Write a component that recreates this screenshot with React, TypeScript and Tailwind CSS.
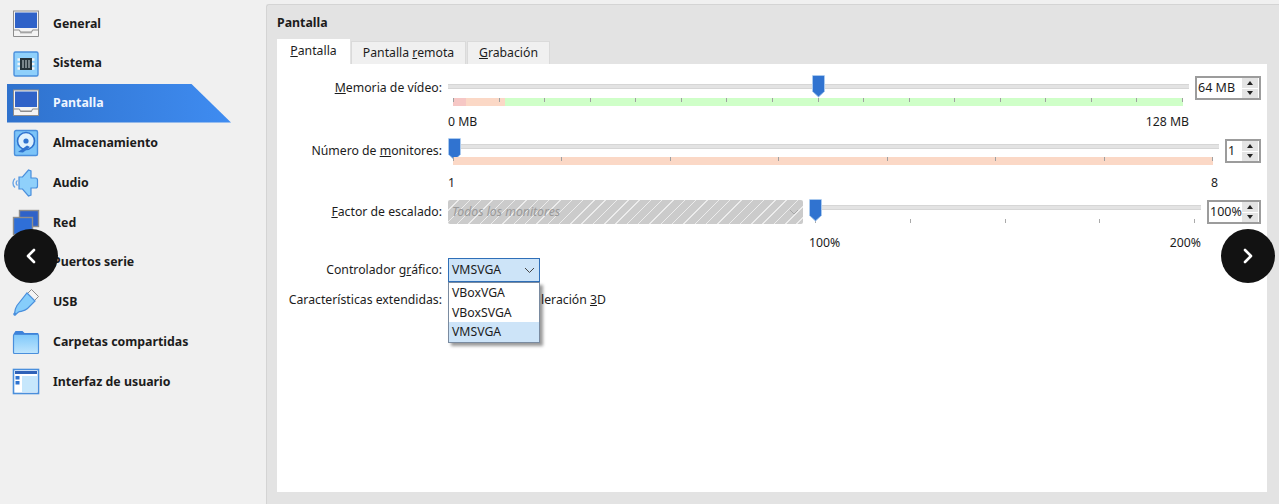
import React from 'react';

const Monitor = ({ tray }: { tray?: boolean }) => (
  <svg width="28" height="28" viewBox="0 0 28 28">
    <rect x="1.5" y="1" width="25" height="21" fill="#f4f4f4" stroke="#8d8d8d" />
    <rect x="3" y="2.5" width="22" height="15.5" fill="#2f62c8" />
    <path d="M1.5 20h6l1 2.5h11l1-2.5h6v6.5h-25z" fill="#f4f4f4" stroke="#8d8d8d" />
    {tray && <path d="M8 23h12" stroke="#bbb" />}
  </svg>
);

const SystemIcon = () => (
  <svg width="28" height="28" viewBox="0 0 28 28">
    <rect x="2" y="2" width="24" height="24" rx="1.5" fill="#8fd0fb" stroke="#4a8fdc" strokeWidth="1.4" />
    <rect x="8" y="8" width="12" height="12" fill="#263238" />
    <path d="M5.5 9.5H8M5.5 14H8M5.5 18.5H8M20 9.5h2.5M20 14h2.5M20 18.5h2.5" stroke="#f4f4f4" strokeWidth="2.4" />
    <path d="M11 10v8M14 10v8M17 10v8" stroke="#cfd8dc" strokeWidth="1" />
  </svg>
);

const DiskIcon = () => (
  <svg width="28" height="28" viewBox="0 0 28 28">
    <rect x="2.5" y="1.5" width="23" height="25" rx="1.5" fill="#7cc4f8" stroke="#4a8fdc" strokeWidth="1.4" />
    <circle cx="14" cy="12" r="8.5" fill="#dff1fd" stroke="#2f73cf" strokeWidth="1.6" />
    <circle cx="14" cy="12" r="2.6" fill="#2f73cf" />
    <path d="M6 23l9-6.5 3 1.5-7 5.5z" fill="#2f73cf" />
  </svg>
);

const AudioIcon = () => (
  <svg width="28" height="28" viewBox="0 0 28 28">
    <path d="M3 9.5a6 6 0 0 0 0 9" fill="none" stroke="#6aa5e6" strokeWidth="1.4" />
    <path d="M5.5 11.5a3 3 0 0 0 0 5" fill="none" stroke="#6aa5e6" strokeWidth="1.4" />
    <path d="M7 8l3.5 0 6-7 2.5 1v7h4.5a2 2 0 0 1 2 2v6a2 2 0 0 1-2 2H19v7l-2.5 1-6-7H7z" fill="#8fd0fb" stroke="#4a8fdc" strokeWidth="1.2" />
  </svg>
);

const NetIcon = () => (
  <svg width="28" height="28" viewBox="0 0 28 28">
    <rect x="7.5" y="1.5" width="19" height="16" fill="#2f62c8" stroke="#8d8d8d" strokeWidth="1.4" />
    <rect x="1.5" y="8.5" width="19" height="17" fill="#2f6fd8" stroke="#8d8d8d" strokeWidth="1.4" />
  </svg>
);

const UsbIcon = () => (
  <svg width="28" height="28" viewBox="0 0 28 28">
    <path d="M19.5 1.5l7 7-4 4-7-7z" fill="#f4f4f4" stroke="#8d8d8d" />
    <path d="M15 5l8 8-7.5 7.5c-3 3-6.5 2.5-9 3.5L3 27c-.8-3 .2-6.5 2-9.500z" fill="#86cdfb" stroke="#4a8fdc" strokeWidth="1.2" />
    <circle cx="2.800" cy="26" r="1.600" fill="#4a8fdc" />
  </svg>
);

const FolderIcon = () => (
  <svg width="28" height="28" viewBox="0 0 28 28">
    <defs>
      <linearGradient id="folderFill" x1="0" y1="0" x2="0" y2="1">
        <stop offset="0" stopColor="#7fc8fa" />
        <stop offset="1" stopColor="#bfe5fd" />
      </linearGradient>
    </defs>
    <path d="M1.500 6l2-3h7l2 2h13a1 1 0 0 1 1 1v1h-25z" fill="#3d82da" />
    <rect x="1.500" y="6.500" width="25" height="19" rx="1" fill="url(#folderFill)" stroke="#4a8fdc" strokeWidth="1.200" />
  </svg>
);

const UiIcon = () => (
  <svg width="28" height="28" viewBox="0 0 28 28">
    <rect x="1.5" y="1.5" width="25" height="24" fill="#fff" stroke="#4a8fdc" strokeWidth="1.6" />
    <rect x="3" y="3" width="22" height="3" fill="#2f62b8" />
    <rect x="3.5" y="8" width="4" height="3.5" fill="#2f73cf" />
    <rect x="3.5" y="13" width="4" height="3.5" fill="#2f73cf" />
    <rect x="10" y="8" width="15" height="16" fill="#c6e7fc" />
  </svg>
);

const items: { label: string; icon: React.ReactNode }[] = [
  { label: 'General', icon: <Monitor tray /> },
  { label: 'Sistema', icon: <SystemIcon /> },
  { label: 'Pantalla', icon: <Monitor /> },
  { label: 'Almacenamiento', icon: <DiskIcon /> },
  { label: 'Audio', icon: <AudioIcon /> },
  { label: 'Red', icon: <NetIcon /> },
  { label: 'Puertos serie', icon: <NetIcon /> },
  { label: 'USB', icon: <UsbIcon /> },
  { label: 'Carpetas compartidas', icon: <FolderIcon /> },
  { label: 'Interfaz de usuario', icon: <UiIcon /> },
];

const Handle = ({ left }: { left: number }) => (
  <svg className="absolute top-[-1px]" style={{ left }} width="13" height="23" viewBox="0 0 13 23">
    <path d="M0.5 1a.5.5 0 0 1 .5-.5h11a.5.5 0 0 1 .5.5v15.5L6.5 22 .5 16.5z" fill="#3073d0" stroke="#a9c9ee" />
  </svg>
);

const Ticks = ({ count, color = 'bg-[#a0a0a0]' }: { count: number; color?: string }) => (
  <div className="flex justify-between h-full">
    {Array.from({ length: count }).map((_, i) => (
      <span key={i} className={`w-px h-[4px] ${color}`} />
    ))}
  </div>
);

const Track = () => <div className="h-[5px] bg-[#e3e3e3] border-y border-[#d6d6d6]" />;

const Spin = ({ value, width }: { value: string; width: string }) => (
  <div className={`${width} h-[24px] shrink-0 flex items-center border-2 border-[#9c9c9c] bg-white pl-[1px] pr-[1px]`}>
    <span className="flex-1 text-[12.5px] leading-none whitespace-nowrap">{value}</span>
    <div className="w-[16px] h-[20px] flex flex-col gap-[1px]">
      <div className="flex-1 bg-[#e4e4e4] flex items-center justify-center">
        <span className="w-0 h-0 border-x-[3.5px] border-x-transparent border-b-[4px] border-b-[#222]" />
      </div>
      <div className="flex-1 bg-[#e4e4e4] flex items-center justify-center">
        <span className="w-0 h-0 border-x-[3.5px] border-x-transparent border-t-[4px] border-t-[#222]" />
      </div>
    </div>
  </div>
);

const Label = ({ children }: { children: React.ReactNode }) => (
  <div className="w-[165px] shrink-0 h-[24px] flex items-center justify-end text-[12.25px] whitespace-nowrap">{children}</div>
);

const NavArrow = ({ side }: { side: 'left' | 'right' }) => (
  <div className={`absolute top-[229px] ${side === 'left' ? 'left-[4px]' : 'left-[1221px]'} w-[54px] h-[54px] rounded-full bg-[#121212] flex items-center justify-center`}>
    <svg width="14" height="18" viewBox="0 0 14 18" fill="none" stroke="#fff" strokeWidth="2.6" strokeLinecap="round" strokeLinejoin="round">
      {side === 'left' ? <path d="M10 3L4 9l6 6" /> : <path d="M4 3l6 6-6 6" />}
    </svg>
  </div>
);

export default function App() {
  return (
    <div className="relative w-[1279px] h-[504px] overflow-hidden flex bg-[#f0f0f0] text-[#1c1c1c] font-['Noto_Sans',sans-serif]">
      {/* Sidebar */}
      <nav className="w-[266px] shrink-0 pt-[4px]">
        {items.map((item) => {
          const active = item.label === 'Pantalla';
          return (
            <div
              key={item.label}
              className={`relative h-[39.8px] ml-[7px] w-[224px] flex items-center text-[12.35px] font-bold ${
                active ? 'text-[#eef5ff]' : ''
              }`}
            >
              {active && (
                <div className="absolute inset-x-0 top-0 h-[39px] bg-gradient-to-r from-[#2f72cd] to-[#3f8cf1] [clip-path:polygon(0_0,184px_0,224px_100%,0_100%)]" />
              )}
              <span className="relative w-[46px] pl-[5px] flex">{item.icon}</span>
              <span className="relative whitespace-nowrap">{item.label}</span>
            </div>
          );
        })}
      </nav>

      {/* Settings panel */}
      <main className="flex-1 mt-[4px] bg-[#e3e3e3] border-l border-t border-[#d4d4d4] rounded-tl-[3px] pl-[10px] pr-[12px] pb-[12px] flex flex-col">
        <div className="h-[34px] pt-[8px] text-[12.35px] font-bold leading-[20px]">Pantalla</div>
        <div className="flex items-end h-[25px] text-[12.25px]">
          <div className="w-[73px] h-[25px] bg-white flex items-center justify-center"><span><u>P</u>antalla</span></div>
          <div className="ml-[1px] w-[115px] h-[23px] bg-[#f0f0f0] border-x border-t border-[#dadada] flex items-center justify-center"><span>Pantalla <u>r</u>emota</span></div>
          <div className="ml-[1px] w-[83px] h-[23px] bg-[#f0f0f0] border-x border-t border-[#dadada] flex items-center justify-center"><span><u>G</u>rabación</span></div>
        </div>

        <div className="flex-1 bg-white pt-[12px] pr-[6px]">
          {/* Memoria de vídeo */}
          <div className="flex h-[63px]">
            <Label><span><u>M</u>emoria de vídeo:</span></Label>
            <div className="relative flex-1 ml-[6px] mr-[6px]">
              <div className="pt-[8px]"><Track /></div>
              <Handle left={364} />
              <div className="relative mt-[9px] ml-[5px] mr-[6px] h-[8px] flex">
                <div className="w-[13px] bg-[#f6c7c5]" />
                <div className="w-[39px] bg-[#fbd8c6]" />
                <div className="flex-1 bg-[#cfffc8]" />
                <div className="absolute inset-0"><Ticks count={17} /></div>
              </div>
              <div className="flex justify-between mt-[7px] text-[12.25px] leading-[18px]">
                <span>0 MB</span>
                <span>128 MB</span>
              </div>
            </div>
            <Spin value="64 MB" width="w-[66px]" />
          </div>

          {/* Número de monitores */}
          <div className="flex h-[61px]">
            <Label><span>Número de <u>m</u>onitores:</span></Label>
            <div className="relative flex-1 ml-[6px] mr-[6px]">
              <div className="pt-[5px]"><Track /></div>
              <Handle left={0} />
              <div className="relative mt-[8px] ml-[5px] mr-[6px] h-[8px] bg-[#fbd8c6]">
                <Ticks count={8} />
              </div>
              <div className="flex justify-between mt-[9px] text-[12.25px] leading-[18px]">
                <span>1</span>
                <span className="mr-[1px]">8</span>
              </div>
            </div>
            <Spin value="1" width="w-[36px]" />
          </div>

          {/* Factor de escalado */}
          <div className="flex h-[58px]">
            <Label><span><u>F</u>actor de escalado:</span></Label>
            <div className="w-[355px] h-[24px] ml-[6px] shrink-0 rounded-[2px] bg-[repeating-linear-gradient(135deg,#cbcbcb_0_7px,#ececec_7px_8px)] flex items-center justify-between pl-[4px] pr-[4px]">
              <span className="text-[12.25px] italic text-[#9a9a9a]">Todos los monitores</span>
              <svg width="10" height="6" viewBox="0 0 10 6" fill="none" stroke="#a8a8a8"><path d="M1 1l4 4 4-4" /></svg>
            </div>
            <div className="relative flex-1 ml-[6px] mr-[6px]">
              <div className="pt-[5px]"><Track /></div>
              <Handle left={0} />
              <div className="mt-[9px] ml-[6px] mr-[6px] h-[5px]"><Ticks count={5} color="bg-[#aaaaaa]" /></div>
              <div className="flex justify-between mt-[10px] text-[12.25px] leading-[18px]">
                <span>100%</span>
                <span>200%</span>
              </div>
            </div>
            <Spin value="100%" width="w-[54px]" />
          </div>

          {/* Controlador gráfico */}
          <div className="flex h-[30px]">
            <Label><span>Controlador g<u>r</u>áfico:</span></Label>
            <div className="relative ml-[6px] w-[92px] h-[24px] border border-[#2f6fb8] bg-[#cde4f8] flex items-center justify-between pl-[3px] pr-[4px] text-[12.25px]">
              <span>VMSVGA</span>
              <svg width="11" height="7" viewBox="0 0 11 7" fill="none" stroke="#444"><path d="M1 1l4.500 4.500L10 1" /></svg>
              <div className="absolute left-[-1px] top-[23px] z-10 w-[92px] h-[61px] bg-white border border-[#7a8ba0] shadow-[3px_3px_3px_rgba(0,0,0,0.4)] leading-[19.5px]">
                <div className="pl-[3px] h-[20px]">VBoxVGA</div>
                <div className="pl-[3px] h-[19px]">VBoxSVGA</div>
                <div className="pl-[3px] h-[20px] bg-[#cde4f8]">VMSVGA</div>
              </div>
            </div>
          </div>

          {/* Características extendidas */}
          <div className="flex h-[24px]">
            <Label><span>Características extendidas:</span></Label>
            <div className="ml-[99px] flex items-center text-[12.25px] whitespace-nowrap">
              <span>leración <u>3</u>D</span>
            </div>
          </div>
        </div>
      </main>

      <NavArrow side="left" />
      <NavArrow side="right" />
    </div>
  );
}
